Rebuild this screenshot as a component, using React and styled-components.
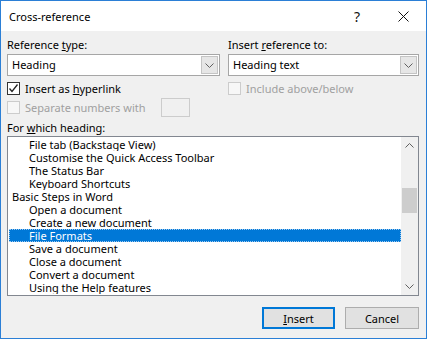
import React from "react";
import styled, { createGlobalStyle } from "styled-components";

const Global = createGlobalStyle`
  html, body { margin: 0; padding: 0; background: #fff; }
  body { font-family: "Noto Sans", "Open Sans", sans-serif; font-size: 11px; color: #000; }
  * { box-sizing: border-box; }
`;

const Window = styled.div`
  width: 427px;
  height: 339px;
  border: 1px solid #2b7fd6;
  background: #f0f0f0;
  display: flex;
  flex-direction: column;
  overflow: hidden;
`;

const TitleBar = styled.div`
  height: 30px;
  background: #fff;
  display: flex;
  align-items: center;
  padding-left: 8px;
  flex: none;
`;

const Title = styled.div`
  flex: 1;
  font-size: 11px;
  color: #000;
`;

const TitleButton = styled.div`
  width: ${(p) => p.$w}px;
  height: 30px;
  display: flex;
  align-items: center;
  justify-content: center;
  font-size: 14px;
  color: #111;
`;

const Body = styled.div`
  flex: 1;
  padding: 6px 7px 0 6px;
  display: flex;
  flex-direction: column;
`;

const Columns = styled.div`
  display: grid;
  grid-template-columns: 213px 1fr;
  column-gap: 8px;
`;

const Col = styled.div`
  display: flex;
  flex-direction: column;
`;

const Label = styled.div`
  height: 15px;
  line-height: 15px;
  margin-bottom: ${(p) => p.$mb || 0}px;
  color: ${(p) => (p.$disabled ? "#a0a0a0" : "#000")};
  white-space: nowrap;
`;

const Combo = styled.div`
  height: 22px;
  border: 1px solid #a6a6a6;
  background: #fff;
  display: flex;
  align-items: stretch;
`;

const ComboText = styled.div`
  flex: 1;
  padding-left: 4px;
  line-height: 20px;
`;

const ComboButton = styled.div`
  width: 17px;
  margin: 1px;
  background: #e6e6e6;
  border: 1px solid #c4c4c4;
  display: flex;
  align-items: center;
  justify-content: center;
`;

const CheckRow = styled.div`
  display: flex;
  align-items: center;
  height: ${(p) => p.$h || 15}px;
  margin-top: ${(p) => p.$mt || 0}px;
  gap: 5px;
  color: ${(p) => (p.$disabled ? "#a0a0a0" : "#000")};
  white-space: nowrap;
`;

const Box = styled.div`
  width: 13px;
  height: 13px;
  border: 1px solid ${(p) => (p.$disabled ? "#cccccc" : "#333")};
  background: ${(p) => (p.$disabled ? "#f7f7f7" : "#fff")};
  display: flex;
  align-items: center;
  justify-content: center;
  flex: none;
`;

const SmallInput = styled.div`
  width: 29px;
  height: 19px;
  border: 1px solid #cccccc;
  background: #f0f0f0;
  margin-left: 11px;
`;

const ListLabel = styled(Label)`
  margin-top: 3px;
`;

const ListBox = styled.div`
  margin-top: 1px;
  height: 160px;
  border: 1px solid #828790;
  background: #fff;
  display: flex;
`;

const Items = styled.div`
  flex: 1;
  padding: 1px 0 0 1px;
  overflow: hidden;
`;

const Item = styled.div`
  height: 13px;
  line-height: 13px;
  padding-left: ${(p) => (p.$level === 1 ? 3 : 20)}px;
  white-space: nowrap;
  overflow: hidden;
  background: ${(p) => (p.$sel ? "#0078d7" : "transparent")};
  color: ${(p) => (p.$sel ? "#fff" : "#000")};
  outline: ${(p) => (p.$sel ? "1px dotted #9ec9f0" : "none")};
  outline-offset: -1px;
`;

const ScrollBar = styled.div`
  width: 17px;
  background: #f0f0f0;
  display: flex;
  flex-direction: column;
`;

const ScrollArrow = styled.div`
  height: 17px;
  display: flex;
  align-items: center;
  justify-content: center;
`;

const Track = styled.div`
  flex: 1;
  padding: 34px 1px 0 1px;
`;

const Thumb = styled.div`
  height: 25px;
  background: #cdcdcd;
`;

const Footer = styled.div`
  display: flex;
  justify-content: flex-end;
  gap: 10px;
  margin-top: 11px;
`;

const Button = styled.div`
  width: ${(p) => p.$w}px;
  height: 22px;
  background: #e1e1e1;
  border: ${(p) => (p.$default ? "2px solid #0078d7" : "1px solid #adadad")};
  display: flex;
  align-items: center;
  justify-content: center;
`;

const Chevron = ({ up, color = "#606060" }) => (
  <svg width="9" height="5" viewBox="0 0 9 5">
    <polyline
      points={up ? "0.5,4.5 4.5,0.5 8.5,4.5" : "0.5,0.5 4.5,4.5 8.5,0.5"}
      fill="none"
      stroke={color}
      strokeWidth="1"
    />
  </svg>
);

const Check = () => (
  <svg width="11" height="11" viewBox="0 0 11 11">
    <polyline points="1.5,5.5 4,8.5 9.5,1.5" fill="none" stroke="#222" strokeWidth="1.3" />
  </svg>
);

const items = [
  { t: "File tab (Backstage View)", l: 2 },
  { t: "Customise the Quick Access Toolbar", l: 2 },
  { t: "The Status Bar", l: 2 },
  { t: "Keyboard Shortcuts", l: 2 },
  { t: "Basic Steps in Word", l: 1 },
  { t: "Open a document", l: 2 },
  { t: "Create a new document", l: 2 },
  { t: "File Formats", l: 2, sel: true },
  { t: "Save a document", l: 2 },
  { t: "Close a document", l: 2 },
  { t: "Convert a document", l: 2 },
  { t: "Using the Help features", l: 2 },
];

export default function App() {
  return (
    <>
      <Global />
      <Window>
        <TitleBar>
          <Title>Cross-reference</Title>
          <TitleButton $w={46}>?</TitleButton>
          <TitleButton $w={46}>
            <svg width="11" height="11" viewBox="0 0 11 11">
              <line x1="0.5" y1="0.5" x2="10.5" y2="10.5" stroke="#111" strokeWidth="1" />
              <line x1="10.5" y1="0.5" x2="0.5" y2="10.5" stroke="#111" strokeWidth="1" />
            </svg>
          </TitleButton>
        </TitleBar>
        <Body>
          <Columns>
            <Col>
              <Label $mb={2}>
                Reference <u>t</u>ype:
              </Label>
              <Combo>
                <ComboText>Heading</ComboText>
                <ComboButton>
                  <Chevron />
                </ComboButton>
              </Combo>
              <CheckRow $mt={5}>
                <Box>
                  <Check />
                </Box>
                <span>
                  Insert as <u>h</u>yperlink
                </span>
              </CheckRow>
              <CheckRow $disabled $h={19} $mt={2}>
                <Box $disabled />
                <span>Separate numbers with</span>
                <SmallInput />
              </CheckRow>
            </Col>
            <Col>
              <Label $mb={2}>
                Insert <u>r</u>eference to:
              </Label>
              <Combo>
                <ComboText>Heading text</ComboText>
                <ComboButton>
                  <Chevron />
                </ComboButton>
              </Combo>
              <CheckRow $disabled $mt={5}>
                <Box $disabled />
                <span>Include above/below</span>
              </CheckRow>
            </Col>
          </Columns>
          <ListLabel>
            For <u>w</u>hich heading:
          </ListLabel>
          <ListBox>
            <Items>
              {items.map((it) => (
                <Item key={it.t} $level={it.l} $sel={it.sel}>
                  {it.t}
                </Item>
              ))}
            </Items>
            <ScrollBar>
              <ScrollArrow>
                <Chevron up />
              </ScrollArrow>
              <Track>
                <Thumb />
              </Track>
              <ScrollArrow>
                <Chevron />
              </ScrollArrow>
            </ScrollBar>
          </ListBox>
          <Footer>
            <Button $w={73} $default>
              <span>
                <u>I</u>nsert
              </span>
            </Button>
            <Button $w={74}>Cancel</Button>
          </Footer>
        </Body>
      </Window>
    </>
  );
}
